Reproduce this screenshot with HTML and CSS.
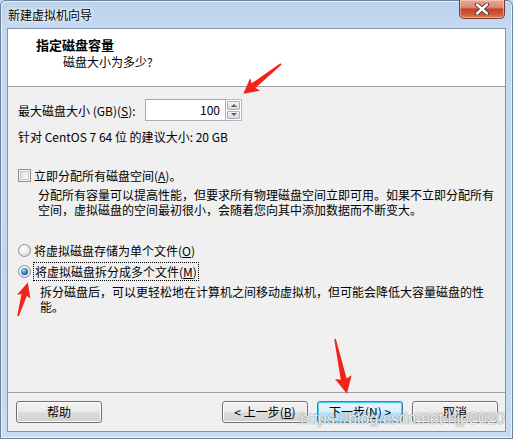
FILE: index.html
```html
<!DOCTYPE html>
<html lang="zh-CN">
<head>
<meta charset="utf-8">
<title>新建虚拟机向导</title>
<link rel="stylesheet" href="styles.css">
</head>
<body>
<div class="window">
  <div class="titlebar">
    <span class="title">新建虚拟机向导</span>
    <div class="close">
      <svg width="18" height="12" viewBox="0 0 18 12"><path d="M4 1.5 L14 10.5 M14 1.5 L4 10.5" stroke="#4a2a26" stroke-width="4.2" stroke-linecap="round"/><path d="M4 1.5 L14 10.5 M14 1.5 L4 10.5" stroke="#ffffff" stroke-width="2.4" stroke-linecap="round"/></svg>
    </div>
  </div>
  <div class="client">
    <div class="header">
      <div class="h-title">指定磁盘容量</div>
      <div class="h-sub">磁盘大小为多少?</div>
    </div>
    <div class="content">
      <div class="size-row">
        <span class="size-label">最大磁盘大小 (GB)(<u>S</u>):</span>
        <div class="spin-input">100</div>
        <div class="spin-btns">
          <span class="spin-btn"><span class="tri-up"></span></span>
          <span class="spin-btn"><span class="tri-down"></span></span>
        </div>
      </div>
      <div class="suggest">针对 CentOS 7 64 位 的建议大小: 20 GB</div>
      <div class="opt-row check-row"><span class="checkbox"></span><span class="opt-label">立即分配所有磁盘空间(<u>A</u>)。</span></div>
      <p class="desc desc1">分配所有容量可以提高性能，但要求所有物理磁盘空间立即可用。如果不立即分配所有<br>空间，虚拟磁盘的空间最初很小，会随着您向其中添加数据而不断变大。</p>
      <div class="opt-row radio-row radio-first"><span class="radio"></span><span class="opt-label">将虚拟磁盘存储为单个文件(<u>O</u>)</span></div>
      <div class="opt-row radio-row radio-second"><span class="radio checked"></span><span class="opt-label focus">将虚拟磁盘拆分成多个文件(<u>M</u>)</span></div>
      <p class="desc desc2">拆分磁盘后，可以更轻松地在计算机之间移动虚拟机，但可能会降低大容量磁盘的性<br>能。</p>
    </div>
    <div class="footer">
      <button class="btn btn-help">帮助</button>
      <button class="btn">&lt; 上一步(<u>B</u>)</button>
      <button class="btn btn-default">下一步(<u>N</u>) &gt;</button>
      <button class="btn">取消</button>
    </div>
  </div>
  <svg class="annot" width="513" height="439" viewBox="0 0 513 439">
    <g fill="#f2231a">
      <polygon transform="translate(281 64) rotate(141.7)" points="0,-0.8 35,-3 33,-8 48,0 33,8 35,3 0,0.8"/>
      <polygon transform="translate(18 316) rotate(-73.6)" points="0,-0.8 22,-2.8 20,-7 35,0 20,7 22,2.8 0,0.8"/>
      <polygon transform="translate(335 339) rotate(77.7)" points="0,-0.8 41,-3 39,-8.5 56,0 39,8.5 41,3 0,0.8"/>
    </g>
  </svg>
  <div class="watermark">https://blog.csdn.net/hjp2020</div>
</div>
</body>
</html>
```

FILE: styles.css
```css
* {
  box-sizing: border-box;
}

html,
body {
  margin: 0;
  padding: 0;
}

body {
  width: 513px;
  height: 439px;
  overflow: hidden;
  font-family: "Noto Sans CJK SC", "Microsoft YaHei", sans-serif;
  font-size: 12px;
  color: #000;
  background: #c4d8ef;
}

.window {
  position: relative;
  width: 513px;
  height: 439px;
  display: flex;
  flex-direction: column;
  padding: 0 6px 6px;
  border: 1px solid #6d8099;
  border-radius: 6px 6px 0 0;
  background: linear-gradient(180deg, #bcd3ee 0%, #c6daf1 8%, #c2d6ee 60%, #c9dbef 100%);
  box-shadow: inset 1px 1px 0 #e6f0fb, inset -1px -1px 0 #e6f0fb;
}

.titlebar {
  height: 27px;
  display: flex;
  justify-content: space-between;
  align-items: flex-start;
}

.title {
  padding-left: 1px;
  line-height: 28px;
  color: #000;
  text-shadow: 0 0 6px #ffffff, 0 0 3px #ffffff;
}

.close {
  width: 46px;
  height: 19px;
  margin-top: -1px;
  margin-right: 1px;
  display: flex;
  align-items: center;
  justify-content: center;
  border: 1px solid #7b3a2f;
  border-top: none;
  border-radius: 0 0 5px 5px;
  background: linear-gradient(180deg, #e9a896 0%, #dd8a73 40%, #c2432b 52%, #cf5a3c 80%, #e08060 100%);
  box-shadow: inset 0 0 0 1px rgba(255, 220, 210, 0.5);
}

.close svg {
  display: block;
}

.client {
  flex: 1;
  display: flex;
  flex-direction: column;
  border: 1px solid #8194ac;
  background: #f0f0f0;
}

.header {
  height: 58px;
  flex: none;
  background: #ffffff;
  border-bottom: 1px solid #a0a0a0;
  padding: 8px 0 0 28px;
}

.h-title {
  font-size: 13px;
  font-weight: bold;
  line-height: 16px;
}

.h-sub {
  line-height: 16px;
  margin-top: 1px;
  margin-left: 27px;
}

.content {
  flex: 1;
  padding: 12px 0 0 10px;
}

.size-row {
  display: flex;
  align-items: center;
  height: 22px;
}

.size-label {
  width: 127px;
  line-height: 15px;
}

.spin-input {
  width: 81px;
  height: 22px;
  border: 1px solid #abadb3;
  border-top-color: #a3a6ad;
  background: #ffffff;
  text-align: right;
  padding-right: 5px;
  line-height: 20px;
}

.spin-btns {
  width: 16px;
  height: 22px;
  display: flex;
  flex-direction: column;
  border: 1px solid #b4b7bd;
  border-left: none;
  background: #ffffff;
  padding: 1px;
  gap: 1px;
}

.spin-btn {
  flex: 1;
  display: flex;
  align-items: center;
  justify-content: center;
  border: 1px solid #a9afb8;
  border-radius: 1px;
  background: linear-gradient(180deg, #f6f6f6 0%, #e6e6e6 50%, #d8d8d8 100%);
}

.tri-up {
  width: 0;
  height: 0;
  border-left: 3px solid transparent;
  border-right: 3px solid transparent;
  border-bottom: 3px solid #4b5e80;
}

.tri-down {
  width: 0;
  height: 0;
  border-left: 3px solid transparent;
  border-right: 3px solid transparent;
  border-top: 3px solid #4b5e80;
}

.suggest {
  margin-top: 8px;
  line-height: 15px;
}

.opt-row {
  display: flex;
  align-items: center;
}

.check-row {
  margin-top: 24px;
  height: 15px;
}

.checkbox {
  width: 13px;
  height: 13px;
  flex: none;
  border: 1px solid #8e8f8f;
  background: linear-gradient(135deg, #dcdcdc 0%, #f4f4f4 70%, #ffffff 100%);
  box-shadow: inset 0 0 0 1px #f4f4f4, inset 0 0 0 2px #c8c8c8;
  margin-right: 3px;
}

.opt-label {
  line-height: 15px;
  white-space: nowrap;
}

.desc {
  margin: 0;
  line-height: 15px;
  white-space: nowrap;
}

.desc1 {
  margin-top: 4px;
  margin-left: 20px;
}

.radio-row {
  height: 19px;
}

.radio-first {
  margin-top: 24px;
}

.radio-second {
  margin-top: 2px;
}

.radio {
  width: 13px;
  height: 13px;
  flex: none;
  border-radius: 50%;
  border: 1px solid #8e8f8f;
  background: radial-gradient(circle at 40% 35%, #ffffff 0%, #f0f0f0 40%, #cfcfcf 100%);
  margin-right: 2px;
  display: flex;
  align-items: center;
  justify-content: center;
}

.radio-first .radio {
  margin-right: 3px;
}

.radio.checked::after {
  content: "";
  width: 7px;
  height: 7px;
  border-radius: 50%;
  background: radial-gradient(circle at 40% 35%, #b8e4fb 0%, #3d9bd6 35%, #0f5c99 70%, #093d6a 100%);
}

.focus {
  border: 1px dotted #000;
  padding: 1px 1px;
  line-height: 15px;
}

.desc2 {
  margin-top: 3px;
  margin-left: 22px;
}

.footer {
  height: 39px;
  flex: none;
  border-top: 1px solid #a0a0a0;
  display: flex;
  align-items: flex-start;
  gap: 9px;
  padding: 8px 7px 0 8px;
}

.btn {
  width: 86px;
  height: 22px;
  padding: 0;
  font-family: "Noto Sans CJK SC", "Microsoft YaHei", sans-serif;
  font-size: 12px;
  line-height: 18px;
  color: #000;
  border: 1px solid #707070;
  border-radius: 3px;
  background: linear-gradient(180deg, #f2f2f2 0%, #ebebeb 48%, #dddddd 52%, #cfcfcf 100%);
  box-shadow: inset 0 0 0 1px #fcfcfc;
}

.btn-help {
  margin-right: auto;
}

.btn-default {
  border-color: #3c7fb1;
  background: linear-gradient(180deg, #eaf6fd 0%, #d9f0fc 48%, #bee6fd 52%, #a7d9f5 100%);
  box-shadow: inset 0 0 0 1px #48d0f7;
}

.annot {
  position: absolute;
  left: -1px;
  top: -1px;
  pointer-events: none;
}

.watermark {
  position: absolute;
  left: 299px;
  top: 409px;
  font-family: "Liberation Sans", Arial, sans-serif;
  font-size: 16px;
  line-height: 18px;
  color: rgba(255, 255, 255, 0.85);
  text-shadow: 0 0 1px #8a8a8a, 0 0 1px #8a8a8a;
  white-space: nowrap;
  pointer-events: none;
}
```
